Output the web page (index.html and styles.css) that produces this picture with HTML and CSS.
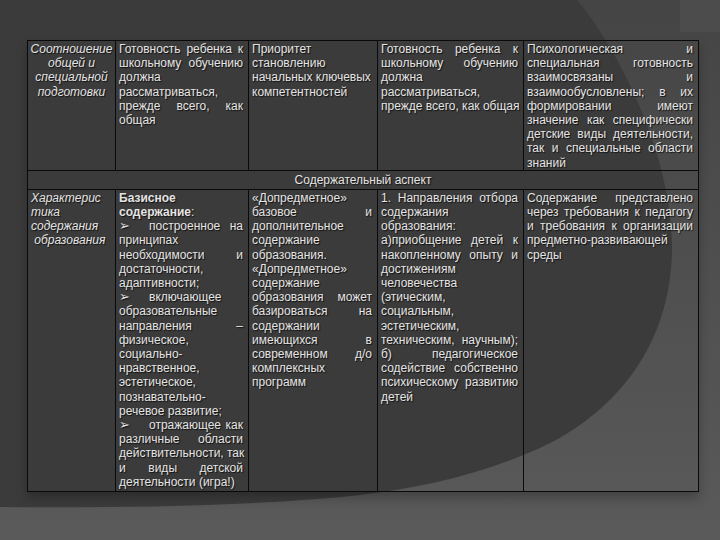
FILE: index.html
```html
<!DOCTYPE html>
<html lang="ru">
<head>
<meta charset="utf-8">
<title>Содержательный аспект</title>
<link rel="stylesheet" href="styles.css">
</head>
<body>
<div class="stage">
  <svg class="bg" width="720" height="540" viewBox="0 0 720 540" aria-hidden="true">
    <defs>
      <linearGradient id="lite" x1="0" y1="0" x2="0" y2="1">
        <stop offset="0" stop-color="#454545"/>
        <stop offset="0.55" stop-color="#505050"/>
        <stop offset="1" stop-color="#5a5a5a"/>
      </linearGradient>
    </defs>
    <rect x="0" y="0" width="720" height="540" fill="url(#lite)"/>
    <rect x="680" y="0" width="40" height="32" fill="#4c4c4c"/>
    <path d="M0,0 L577,0 C615,45 672,150 672,250 C670,360 600,420 540,448 C480,475 420,488 360,495 C260,506 120,508 0,507 Z" fill="#3b3b3b"/>
  </svg>
  <div class="sheet">
    <table class="grid">
      <colgroup>
        <col class="c1"><col class="c2"><col class="c3"><col class="c4"><col class="c5">
      </colgroup>
      <tr class="r1">
        <td class="head it">
          <span class="l">Соотношение</span>
          <span class="l">общей и</span>
          <span class="l">специальной</span>
          <span class="l">подготовки</span>
        </td>
        <td>
          <span class="l j">Готовность ребенка к</span>
          <span class="l j">школьному обучению</span>
          <span class="l">должна</span>
          <span class="l">рассматриваться,</span>
          <span class="l j">прежде всего, как</span>
          <span class="l">общая</span>
        </td>
        <td>
          <span class="l">Приоритет</span>
          <span class="l">становлению</span>
          <span class="l">начальных ключевых</span>
          <span class="l">компетентностей</span>
        </td>
        <td>
          <span class="l j">Готовность ребенка к</span>
          <span class="l j">школьному обучению</span>
          <span class="l">должна</span>
          <span class="l">рассматриваться,</span>
          <span class="l">прежде всего, как общая</span>
        </td>
        <td>
          <span class="l j">Психологическая и</span>
          <span class="l j">специальная готовность</span>
          <span class="l j">взаимосвязаны и</span>
          <span class="l j">взаимообусловлены; в их</span>
          <span class="l j">формировании имеют</span>
          <span class="l j">значение как специфически</span>
          <span class="l j">детские виды деятельности,</span>
          <span class="l j">так и специальные области</span>
          <span class="l">знаний</span>
        </td>
      </tr>
      <tr class="r2">
        <td colspan="5" class="section">Содержательный аспект</td>
      </tr>
      <tr class="r3">
        <td class="it">
          <span class="l">Характерис</span>
          <span class="l">тика</span>
          <span class="l">содержания</span>
          <span class="l">&nbsp;образования</span>
        </td>
        <td>
          <span class="l"><b>Базисное</b></span>
          <span class="l"><b>содержание</b>:</span>
          <span class="l j"><span class="bul">➢</span>построенное на</span>
          <span class="l">принципах</span>
          <span class="l j">необходимости и</span>
          <span class="l">достаточности,</span>
          <span class="l">адаптивности;</span>
          <span class="l"><span class="bul">➢</span>включающее</span>
          <span class="l">образовательные</span>
          <span class="l j">направления –</span>
          <span class="l">физическое,</span>
          <span class="l">социально-</span>
          <span class="l">нравственное,</span>
          <span class="l">эстетическое,</span>
          <span class="l">познавательно-</span>
          <span class="l">речевое развитие;</span>
          <span class="l j"><span class="bul">➢</span>отражающее как</span>
          <span class="l j">различные области</span>
          <span class="l j">действительности, так</span>
          <span class="l j">и виды детской</span>
          <span class="l">деятельности (игра!)</span>
        </td>
        <td>
          <span class="l">«Допредметное»</span>
          <span class="l j">базовое и</span>
          <span class="l">дополнительное</span>
          <span class="l">содержание</span>
          <span class="l">образования.</span>
          <span class="l">«Допредметное»</span>
          <span class="l">содержание</span>
          <span class="l j">образования может</span>
          <span class="l j">базироваться на</span>
          <span class="l">содержании</span>
          <span class="l j">имеющихся в</span>
          <span class="l j">современном д/о</span>
          <span class="l">комплексных</span>
          <span class="l">программ</span>
        </td>
        <td>
          <span class="l j">1. Направления отбора</span>
          <span class="l">содержания</span>
          <span class="l">образования:</span>
          <span class="l j">а)приобщение детей к</span>
          <span class="l j">накопленному опыту и</span>
          <span class="l">достижениям</span>
          <span class="l">человечества</span>
          <span class="l">(этическим,</span>
          <span class="l">социальным,</span>
          <span class="l">эстетическим,</span>
          <span class="l j">техническим, научным);</span>
          <span class="l j">б) педагогическое</span>
          <span class="l j">содействие собственно</span>
          <span class="l j">психическому развитию</span>
          <span class="l">детей</span>
        </td>
        <td>
          <span class="l j">Содержание представлено</span>
          <span class="l j">через требования к педагогу</span>
          <span class="l j">и требования к организации</span>
          <span class="l">предметно-развивающей</span>
          <span class="l">среды</span>
        </td>
      </tr>
    </table>
  </div>
</div>
</body>
</html>
```
FILE: styles.css
```css
html, body {
  margin: 0;
  padding: 0;
  background: #3b3b3b;
}

.stage {
  display: grid;
  width: 720px;
  height: 540px;
  overflow: hidden;
}

.bg {
  grid-area: 1 / 1;
  display: block;
}

.sheet {
  grid-area: 1 / 1;
  padding: 40px 0 0 27px;
}

.grid {
  border-collapse: collapse;
  table-layout: fixed;
  width: 671px;
  font-family: "Liberation Sans", Arial, sans-serif;
  font-size: 12px;
  line-height: 14.2px;
  color: #e4e4e4;
  text-shadow: 1px 1px 1px #111;
  box-shadow: 0 6px 10px rgba(0, 0, 0, 0.25);
}

.c1 { width: 88px; }
.c2 { width: 133px; }
.c3 { width: 129px; }
.c4 { width: 146px; }
.c5 { width: 175px; }

.grid td {
  border: 1px solid #0a0a0a;
  vertical-align: top;
  padding: 1px 5px 0 3px;
  overflow: hidden;
}

.r1 { height: 127px; }
.r2 { height: 19px; }
.r3 { height: 302px; }

.l {
  display: block;
  white-space: nowrap;
}

.j {
  text-align: justify;
  text-align-last: justify;
}

.it {
  font-style: italic;
}

.grid td.head {
  text-align: center;
  padding: 1px 2px 0 2px;
}

.grid td.section {
  text-align: center;
  vertical-align: middle;
  padding: 0;
}

.grid b {
  font-weight: bold;
}

.bul {
  display: inline-block;
  width: 30px;
  text-align: left;
  font-family: "DejaVu Sans", sans-serif;
  font-size: 13px;
}
```
